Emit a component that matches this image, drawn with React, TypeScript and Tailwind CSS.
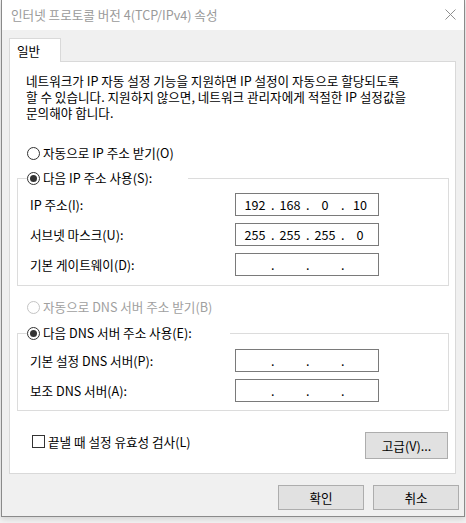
import { Fragment } from "react";
import clsx from "clsx";

const FONT = "font-['Noto_Sans_CJK_KR','Noto_Sans',sans-serif]";

function Radio({ label, checked, disabled }: { label: string; checked?: boolean; disabled?: boolean }) {
    return (
        <span className="flex h-[16px] items-center">
            <span
                className={clsx(
                    "flex h-[13px] w-[13px] shrink-0 items-center justify-center rounded-full border bg-white",
                    disabled ? "border-[#c4c4c4]" : "border-[#333333]"
                )}
            >
                {checked && <span className="h-[7px] w-[7px] rounded-full bg-[#333333]" />}
            </span>
            <span className={clsx("ml-[3px] whitespace-nowrap leading-[16px]", disabled ? "text-[#a0a0a0]" : "text-black")}>
                {label}
            </span>
        </span>
    );
}

function IpField({ parts }: { parts: string[] }) {
    return (
        <div className="flex h-[23px] w-[144px] items-center border border-[#7a7a7a] bg-white pl-[3px] leading-[16px]">
            {parts.map((p, i) => (
                <Fragment key={i}>
                    {i > 0 && <span className="w-[3px] text-center">.</span>}
                    <span className="w-[32px] text-center">{p}</span>
                </Fragment>
            ))}
        </div>
    );
}

function FieldRow({ label, parts }: { label: string; parts: string[] }) {
    return (
        <div className="flex items-center">
            <span className="w-[205px] whitespace-nowrap leading-[16px]">{label}</span>
            <IpField parts={parts} />
        </div>
    );
}

function Button({ children, className }: { children: React.ReactNode; className?: string }) {
    return (
        <button
            className={clsx(
                "flex items-center justify-center border border-[#adadad] bg-[#e1e1e1] leading-[16px] text-black",
                className
            )}
        >
            {children}
        </button>
    );
}

export default function App() {
    const empty = ["", "", "", ""];

    return (
        <div className={clsx("h-[523px] w-[466px] overflow-hidden bg-[#f3f3f3] text-[12.6px] text-black", FONT)}>
            <div className="ml-[1px] flex h-[517px] w-[464px] flex-col border-x border-b border-[#8a8a8a] bg-[#f0f0f0] shadow-[0_2px_6px_rgba(0,0,0,0.15)]">
                {/* Title bar */}
                <div className="flex h-[30px] shrink-0 items-center justify-between bg-white pl-[9px] pr-[8px]">
                    <span className="leading-[16px] text-[#9a9a9a]">인터넷 프로토콜 버전 4(TCP/IPv4) 속성</span>
                    <svg width="11" height="11" viewBox="0 0 11 11" className="-mt-[2px]">
                        <path d="M0.5 0.5 L10.5 10.5 M10.5 0.5 L0.5 10.5" stroke="#8f8f8f" strokeWidth="1" fill="none" />
                    </svg>
                </div>

                {/* Body */}
                <div className="flex flex-1 flex-col pl-[7px] pt-[8px]">
                    {/* Tab */}
                    <div className="relative z-10 -mb-px flex h-[24px] w-[52px] items-center border border-b-0 border-[#d9d9d9] bg-white pl-[7px] leading-[16px]">
                        일반
                    </div>

                    {/* Tab panel */}
                    <div className="flex h-[413px] w-[447px] flex-col border border-[#d9d9d9] bg-white">
                        <p className="whitespace-nowrap pl-[16px] pt-[11px] leading-[16px]">
                            네트워크가 IP 자동 설정 기능을 지원하면 IP 설정이 자동으로 할당되도록
                            <br />
                            할 수 있습니다. 지원하지 않으면, 네트워크 관리자에게 적절한 IP 설정값을
                            <br />
                            문의해야 합니다.
                        </p>

                        <div className="mt-[24px] pl-[17px]">
                            <Radio label="자동으로 IP 주소 받기(O)" />
                        </div>

                        {/* Static IP group */}
                        <fieldset className="ml-[7px] mt-[9px] w-[432px] border border-[#dcdcdc] pb-[9px]">
                            <legend className="ml-[9px] w-[161px]">
                                <Radio label="다음 IP 주소 사용(S):" checked />
                            </legend>
                            <div className="flex flex-col gap-[7px] pl-[12px] pt-[7px]">
                                <FieldRow label="IP 주소(I):" parts={["192", "168", "0", "10"]} />
                                <FieldRow label="서브넷 마스크(U):" parts={["255", "255", "255", "0"]} />
                                <FieldRow label="기본 게이트웨이(D):" parts={empty} />
                            </div>
                        </fieldset>

                        <div className="mt-[13px] pl-[17px]">
                            <Radio label="자동으로 DNS 서버 주소 받기(B)" disabled />
                        </div>

                        {/* DNS group */}
                        <fieldset className="ml-[7px] mt-[10px] w-[432px] border border-[#dcdcdc] pb-[8px]">
                            <legend className="ml-[9px] w-[203px]">
                                <Radio label="다음 DNS 서버 주소 사용(E):" checked />
                            </legend>
                            <div className="flex flex-col gap-[7px] pl-[12px] pt-[8px]">
                                <FieldRow label="기본 설정 DNS 서버(P):" parts={empty} />
                                <FieldRow label="보조 DNS 서버(A):" parts={empty} />
                            </div>
                        </fieldset>

                        {/* Validate + advanced */}
                        <div className="mt-[21px] flex items-start justify-between pl-[22px] pr-[7px]">
                            <div className="mt-[3px] flex h-[13px] items-center">
                                <span className="h-[13px] w-[13px] border border-[#333333] bg-white" />
                                <span className="ml-[3px] whitespace-nowrap leading-[16px]">끝낼 때 설정 유효성 검사(L)</span>
                            </div>
                            <Button className="h-[27px] w-[83px]">고급(V)...</Button>
                        </div>
                    </div>

                    {/* Dialog buttons */}
                    <div className="mt-[11px] flex justify-end gap-[9px] pr-[5px]">
                        <Button className="h-[25px] w-[86px]">확인</Button>
                        <Button className="h-[25px] w-[86px]">취소</Button>
                    </div>
                </div>
            </div>
        </div>
    );
}
